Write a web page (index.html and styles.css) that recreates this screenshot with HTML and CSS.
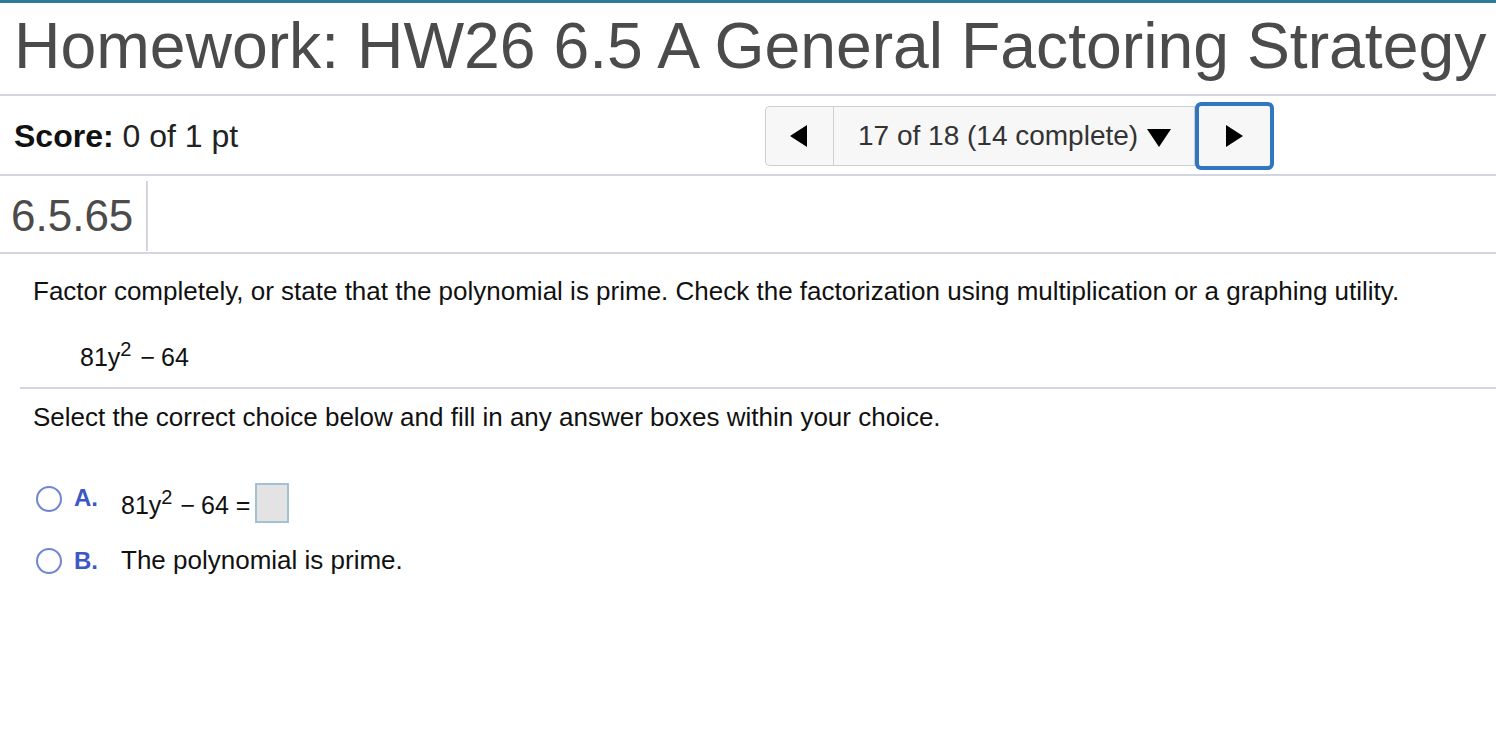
FILE: index.html
```html
<!DOCTYPE html>
<html>
<head>
<meta charset="utf-8">
<link rel="stylesheet" href="styles.css">
</head>
<body>
<div class="page">
  <header class="title-bar">
    <h1 class="title">Homework: HW26 6.5 A General Factoring Strategy</h1>
  </header>
  <div class="score-row">
    <div class="score"><b>Score:</b> 0 of 1 pt</div>
    <div class="nav">
      <button class="nav-btn prev"><span class="tri-left"></span></button>
      <div class="nav-mid">17 of 18 (14 complete) <span class="tri-down"></span></div>
      <button class="nav-btn next"><span class="tri-right"></span></button>
    </div>
  </div>
  <div class="qid-row">
    <div class="qid">6.5.65</div>
  </div>
  <div class="question">
    <p class="prompt">Factor completely, or state that the polynomial is prime. Check the factorization using multiplication or a graphing utility.</p>
    <div class="expr">81y<sup>2</sup><span class="minus">&minus;</span>64</div>
  </div>
  <div class="answer">
    <p class="instr">Select the correct choice below and fill in any answer boxes within your choice.</p>
    <div class="choice choice-a">
      <span class="radio"></span>
      <span class="letter">A.</span>
      <span class="math">81y<sup>2</sup><span class="minus">&minus;</span>64 =</span>
      <span class="box"></span>
    </div>
    <div class="choice choice-b">
      <span class="radio"></span>
      <span class="letter">B.</span>
      <span class="text">The polynomial is prime.</span>
    </div>
  </div>
</div>
</body>
</html>
```
FILE: styles.css
```css
* { box-sizing: border-box; }
html, body { margin: 0; padding: 0; background: #fff; }
body { font-family: "Liberation Sans", Arial, Helvetica, sans-serif; color: #000; }

.page { width: 1496px; border-top: 3px solid #2f7b9a; }

.title-bar { height: 93px; border-bottom: 2px solid #d3d6e2; display: flex; align-items: center; padding-left: 14px; }
.title { margin: 0; font-weight: normal; font-size: 64.3px; color: #4b4b4b; white-space: nowrap; line-height: 1; padding-bottom: 4px; }

.score-row { height: 80px; border-bottom: 2px solid #d3d6e2; display: flex; align-items: center; padding-left: 14px; }
.score { font-size: 32px; color: #222; width: 751px; padding-top: 2px; }
.score b { font-weight: bold; color: #111; }

.nav { display: flex; align-items: stretch; height: 60px; margin-top: 2px; }
.nav-btn { border: 1px solid #cfcfcf; background: #f7f7f7; padding: 0; display: flex; align-items: center; justify-content: center; }
.prev { width: 68px; border-radius: 5px 0 0 5px; border-right: none; }
.nav-mid { width: 362px; border: 1px solid #cfcfcf; background: #f7f7f7; display: flex; align-items: center; padding-left: 24px; font-size: 28px; color: #333; gap: 9px; white-space: nowrap; }
.next { width: 79px; height: 68px; margin-top: -4px; border: 4px solid #3077c0; border-radius: 6px; }
.tri-left { width: 0; height: 0; border-top: 11px solid transparent; border-bottom: 11px solid transparent; border-right: 17px solid #000; margin-left: -2px; }
.tri-right { width: 0; height: 0; border-top: 11px solid transparent; border-bottom: 11px solid transparent; border-left: 17px solid #000; }
.tri-down { display: inline-block; width: 0; height: 0; border-left: 12px solid transparent; border-right: 12px solid transparent; border-top: 18px solid #000; margin-top: 4px; }

.qid-row { height: 78px; border-bottom: 2px solid #d3d6e2; display: flex; align-items: center; padding-top: 3px; }
.qid { font-size: 44px; color: #4b4b4b; padding: 0 13px 0 11px; height: 70px; display: flex; align-items: center; border-right: 2px solid #d3d6e2; }

.question { margin-left: 20px; border-bottom: 2px solid #d3d6e2; padding: 22px 0 15px 13px; }
.prompt { margin: 0; font-size: 26px; color: #111; line-height: 30px; }
.expr { font-size: 25px; margin: 36px 0 0 47px; color: #111; line-height: 30px; }
sup { font-size: 0.8em; line-height: 0; vertical-align: 0.5em; }
.minus { margin: 0 6px 0 9px; }

.answer { padding: 13px 0 0 33px; }
.instr { margin: 0; font-size: 26px; color: #111; line-height: 30px; }
.choice { display: flex; align-items: center; font-size: 26px; color: #111; }
.choice-a { margin-top: 49px; height: 44px; }
.choice-b { margin-top: 20px; }
.radio { width: 26px; height: 26px; border-radius: 50%; border: 2px solid #6f86d4; background: radial-gradient(circle, #fff 55%, #eef1fb 100%); margin-left: 3px; margin-right: 12px; flex-shrink: 0; }
.choice-a .radio { margin-top: -8px; }
.letter { color: #3b58c5; font-weight: bold; width: 47px; font-size: 24px; }
.choice-a .letter { margin-top: -10px; }
.choice-a .math { font-size: 25px; margin-top: 4px; }
.choice-a .minus { margin: 0 6px 0 8px; }
.box { display: inline-block; width: 34px; height: 40px; background: #e3e3e3; border: 2px solid #a3c1d2; margin-left: 5px; }
```
